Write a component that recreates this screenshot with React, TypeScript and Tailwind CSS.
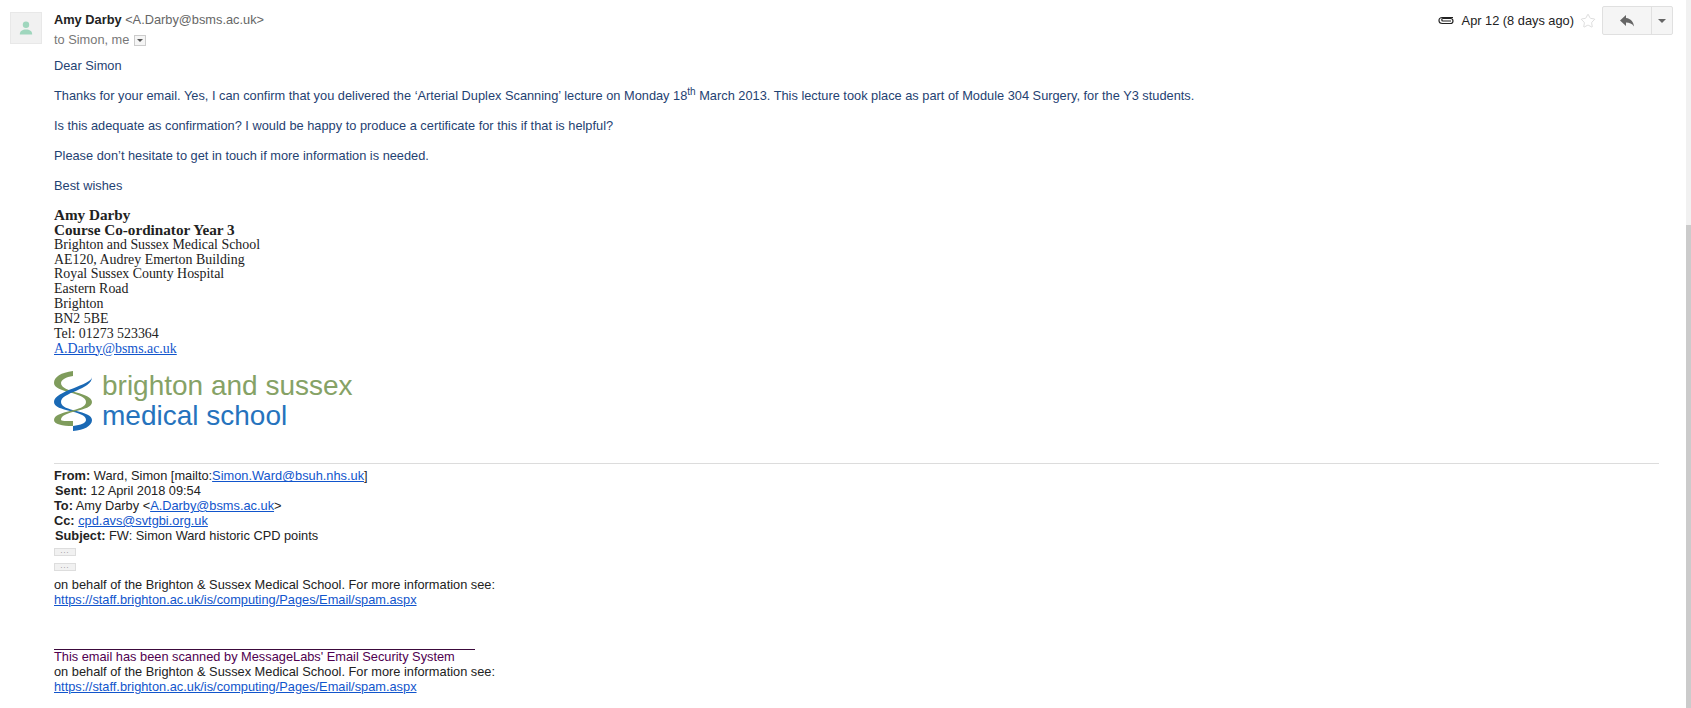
import React from 'react'
import { Star } from 'lucide-react'

const sans = "font-['Liberation_Sans',Arial,sans-serif]"
const link = "text-[#1155cc] underline"

function Avatar() {
  return (
    <div className="w-8 h-8 bg-[#f1f1f1] border border-[#e8e8e8] flex items-center justify-center shrink-0">
      <svg width="14" height="14" viewBox="0 0 14 14" fill="#9fd6bd">
        <circle cx="7" cy="3.8" r="3.2" />
        <path d="M0.8 13.5c0-3.6 2.6-5 6.2-5s6.2 1.400 6.200 5z" />
      </svg>
    </div>
  )
}

function Helix() {
  return (
    <svg width="38" height="60" viewBox="0 0 38 60" className="shrink-0">
      <path d="M19 0C7 1.500 0 6 0 12C0 22 32 21 32 31L38 31C38 21 7 22 7 12C7 9 12 6 19 5Z" fill="#7f9c5c" />
      <path d="M38 6C38 14 0 20 0 31C0 41 32 39 32 49C32 52 27 54 19 55L19 60C30 59 38 55 38 49C38 39 7 41 7 31C7 21 38 19 38 6Z" fill="#1a69b5" />
      <path d="M32 31C32 41 0 39 0 49C0 53 8 55 19 55L19 50C12 50 7 50 7 49C7 39 38 41 38 31Z" fill="#7f9c5c" />
    </svg>
  )
}

function Logo() {
  return (
    <div className="flex items-center gap-[10px] mt-[15px] h-[60px]">
      <Helix />
      <div className="text-[28px] leading-[30px] -mt-px">
        <div className="text-[#86a266]">brighton and sussex</div>
        <div className="text-[#2673bd]">medical school</div>
      </div>
    </div>
  )
}

function Signature() {
  return (
    <div className="mt-[14px] font-['Liberation_Serif',Georgia,serif] text-[13.9px] leading-[14.85px] text-[#222]">
      <div className="font-bold text-[15.2px]">Amy Darby</div>
      <div className="font-bold text-[15.2px]">Course Co-ordinator Year 3</div>
      <div>Brighton and Sussex Medical School</div>
      <div>AE120, Audrey Emerton Building</div>
      <div>Royal Sussex County Hospital</div>
      <div>Eastern Road</div>
      <div>Brighton</div>
      <div>BN2 5BE</div>
      <div>Tel: 01273 523364</div>
      <a className={link}>A.Darby@bsms.ac.uk</a>
    </div>
  )
}

function MoreDots() {
  return (
    <div className="w-[22px] h-[8px] bg-[#f1f1f1] border border-[#ddd] flex items-center justify-center text-[7px] leading-none text-[#777] tracking-[1px]">
      <span className="-mt-[3px]">...</span>
    </div>
  )
}

function Quoted() {
  return (
    <div className="text-[12.8px] leading-[14.8px] text-[#222]">
      <div className="border-t border-[#dcdcdc] mt-[32px] pt-[5px]">
        <div><b>From:</b> Ward, Simon [mailto:<a className={link}>Simon.Ward@bsuh.nhs.uk</a>]</div>
        <div className="pl-px"><b>Sent:</b> 12 April 2018 09:54</div>
        <div><b>To:</b> Amy Darby &lt;<a className={link}>A.Darby@bsms.ac.uk</a>&gt;</div>
        <div><b>Cc:</b> <a className={link}>cpd.avs@svtgbi.org.uk</a></div>
        <div className="pl-px"><b>Subject:</b> FW: Simon Ward historic CPD points</div>
      </div>
      <div className="flex flex-col gap-[7px] mt-[5px] mb-[7px]">
        <MoreDots />
        <MoreDots />
      </div>
      <div>on behalf of the Brighton &amp; Sussex Medical School. For more information see:</div>
      <a className={link}>https://staff.brighton.ac.uk/is/computing/Pages/Email/spam.aspx</a>
      <div className="w-[421px] border-b border-[#3c0a3c] h-[34px] mt-[8px]" />
      <div className="text-[#500050]">This email has been scanned by MessageLabs' Email Security System</div>
      <div>on behalf of the Brighton &amp; Sussex Medical School. For more information see:</div>
      <a className={link}>https://staff.brighton.ac.uk/is/computing/Pages/Email/spam.aspx</a>
    </div>
  )
}

function Header() {
  return (
    <div className="flex items-start">
      <div className="pt-[12px] pl-[10px]">
        <Avatar />
      </div>
      <div className="ml-[12px] pt-[12px] flex-1">
        <div className="text-[12.8px] leading-[16px] text-[#666]">
          <span className="font-bold text-[#222]">Amy Darby</span> &lt;A.Darby@bsms.ac.uk&gt;
        </div>
        <div className="text-[12.8px] leading-[16px] mt-[4px] text-[#777] flex items-center gap-[5px]">
          to Simon, me
          <span className="w-[12px] h-[11px] mt-px border border-[#ccc] bg-[#f5f5f5] flex items-center justify-center">
            <span className="border-x-[3px] border-x-transparent border-t-[3px] border-t-[#555]" />
          </span>
        </div>
      </div>
      <div className="flex items-center pt-[6px] pr-[13px]">
        <svg width="16" height="9" viewBox="0 0 16 9" fill="none" stroke="#222" strokeWidth="1.200">
          <path d="M15 2.500H4.500a3.500 3 0 0 0 0 6h8a2.500 2.500 0 0 0 0-5H5a1 1 0 0 0 0 2.500h8" transform="translate(0 -1)" />
        </svg>
        <span className="ml-[8px] text-[12.8px] text-[#222]">Apr 12 (8 days ago)</span>
        <Star size={16} strokeWidth={1} className="ml-[6px] text-[#ccc]" />
        <div className="ml-[6px] flex h-[29px] border border-[#e0e0e0] rounded-[2px] bg-[#f5f5f5]">
          <div className="w-[49px] flex items-center justify-center border-r border-[#e0e0e0]">
            <svg width="14" height="12" viewBox="0 0 14 12" fill="#666">
              <path d="M6 0L0 5.500 6 11V7.500c3.500 0 6 1 8 4-.5-4.500-3-8-8-8.500z" />
            </svg>
          </div>
          <div className="w-[20px] flex items-center justify-center">
            <span className="border-x-[4px] border-x-transparent border-t-[4px] border-t-[#666]" />
          </div>
        </div>
      </div>
    </div>
  )
}

function Body() {
  const p = "text-[12.8px] leading-[16px] text-[#1f4272]"
  return (
    <div className="pl-[54px] pr-[27px]">
      <div className={`${p} mt-[10px]`}>Dear Simon</div>
      <div className={`${p} mt-[14px]`}>
        Thanks for your email. Yes, I can confirm that you delivered the ‘Arterial Duplex Scanning’ lecture on Monday 18<sup className="text-[10px]">th</sup> March 2013. This lecture took place as part of Module 304 Surgery, for the Y3 students.
      </div>
      <div className={`${p} mt-[14px]`}>Is this adequate as confirmation? I would be happy to produce a certificate for this if that is helpful?</div>
      <div className={`${p} mt-[14px]`}>Please don’t hesitate to get in touch if more information is needed.</div>
      <div className={`${p} mt-[14px]`}>Best wishes</div>
      <Signature />
      <Logo />
      <Quoted />
    </div>
  )
}

export default function App() {
  return (
    <div className={`${sans} flex h-[708px] w-full overflow-hidden bg-white`}>
      <div className="flex-1 min-w-0">
        <Header />
        <Body />
      </div>
      <div className="w-[5px] shrink-0 flex flex-col">
        <div className="h-[225px] bg-[#f1f1f1]" />
        <div className="flex-1 bg-[#cbcbcb]" />
      </div>
    </div>
  )
}
